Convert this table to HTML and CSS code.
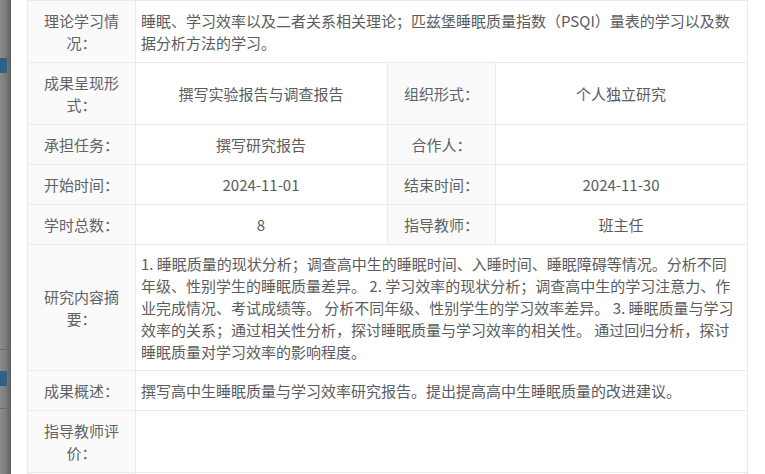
FILE: index.html
```html
<!DOCTYPE html>
<html lang="zh-CN">
<head>
<meta charset="utf-8">
<title>研究详情</title>
<link rel="stylesheet" href="styles.css">
</head>
<body>
<div class="screen">
  <div class="backdrop">
    <div class="bd-gap bd-gap-1"></div>
    <div class="bd-mark"></div>
    <div class="bd-gap bd-gap-2"></div>
    <div class="bd-line"></div>
    <div class="bd-gap bd-gap-3"></div>
    <div class="bd-mark"></div>
    <div class="bd-gap bd-gap-4"></div>
    <div class="bd-line"></div>
  </div>
  <div class="dialog">
    <table class="info">
      <colgroup>
        <col class="c-label"><col class="c-value"><col class="c-label"><col class="c-value">
      </colgroup>
      <tr>
        <th>理论学习情况：</th>
        <td colspan="3" class="left">睡眠、学习效率以及二者关系相关理论；匹兹堡睡眠质量指数（PSQI）量表的学习以及数据分析方法的学习。</td>
      </tr>
      <tr>
        <th>成果呈现形式：</th>
        <td>撰写实验报告与调查报告</td>
        <th>组织形式：</th>
        <td>个人独立研究</td>
      </tr>
      <tr>
        <th>承担任务：</th>
        <td>撰写研究报告</td>
        <th>合作人：</th>
        <td></td>
      </tr>
      <tr>
        <th>开始时间：</th>
        <td>2024-11-01</td>
        <th>结束时间：</th>
        <td>2024-11-30</td>
      </tr>
      <tr>
        <th>学时总数：</th>
        <td>8</td>
        <th>指导教师：</th>
        <td>班主任</td>
      </tr>
      <tr>
        <th>研究内容摘要：</th>
        <td colspan="3" class="left long">1. 睡眠质量的现状分析；调查高中生的睡眠时间、入睡时间、睡眠障碍等情况。分析不同年级、性别学生的睡眠质量差异。 2. 学习效率的现状分析；调查高中生的学习注意力、作业完成情况、考试成绩等。 分析不同年级、性别学生的学习效率差异。 3. 睡眠质量与学习效率的关系；通过相关性分析，探讨睡眠质量与学习效率的相关性。 通过回归分析，探讨睡眠质量对学习效率的影响程度。</td>
      </tr>
      <tr>
        <th>成果概述：</th>
        <td colspan="3" class="left">撰写高中生睡眠质量与学习效率研究报告。提出提高高中生睡眠质量的改进建议。</td>
      </tr>
      <tr>
        <th>指导教师评价：</th>
        <td colspan="3" class="left"></td>
      </tr>
      <tr>
        <th>&nbsp;</th>
        <td colspan="3" class="left"></td>
      </tr>
    </table>
  </div>
</div>
</body>
</html>
```

FILE: styles.css
```css
html, body {
  margin: 0;
  padding: 0;
  background: #ffffff;
}

body {
  font-family: "Noto Sans CJK SC", "Noto Sans", sans-serif;
  font-size: 15px;
  color: #606266;
}

.screen {
  display: flex;
  width: 765px;
  height: 474px;
  overflow: hidden;
}

.backdrop {
  width: 11px;
  flex: none;
  display: flex;
  flex-direction: column;
  background: linear-gradient(to right, #8c8c8c 0%, #7a7a7a 55%, #5c5c5c 100%);
}

.bd-gap { flex: none; }
.bd-gap-1 { height: 58px; }
.bd-gap-2 { height: 276px; }
.bd-gap-3 { height: 21px; }
.bd-gap-4 { height: 22px; }

.bd-mark {
  flex: none;
  width: 7px;
  height: 15px;
  background: #2f6186;
}

.bd-line {
  flex: none;
  height: 1px;
  background: #6a6a6a;
}

.dialog {
  flex: 1;
  background: #ffffff;
  padding: 0 18px 0 16px;
}

.info {
  width: 720px;
  border-collapse: collapse;
  table-layout: fixed;
}

.c-label { width: 108px; }
.c-value { width: 252px; }

.info th,
.info td {
  border: 1px solid #e9eaec;
  line-height: 22px;
  vertical-align: middle;
}

.info th {
  background: #fafafa;
  font-weight: normal;
  color: #606266;
  text-align: center;
  padding: 9px 12px 8px;
}

.info td {
  background: #ffffff;
  text-align: center;
  color: #5a5c60;
  padding: 9px 6px 8px 5px;
}

.info td.left {
  text-align: left;
}

.info td.long {
  padding-top: 8px;
  padding-bottom: 7px;
}
```
